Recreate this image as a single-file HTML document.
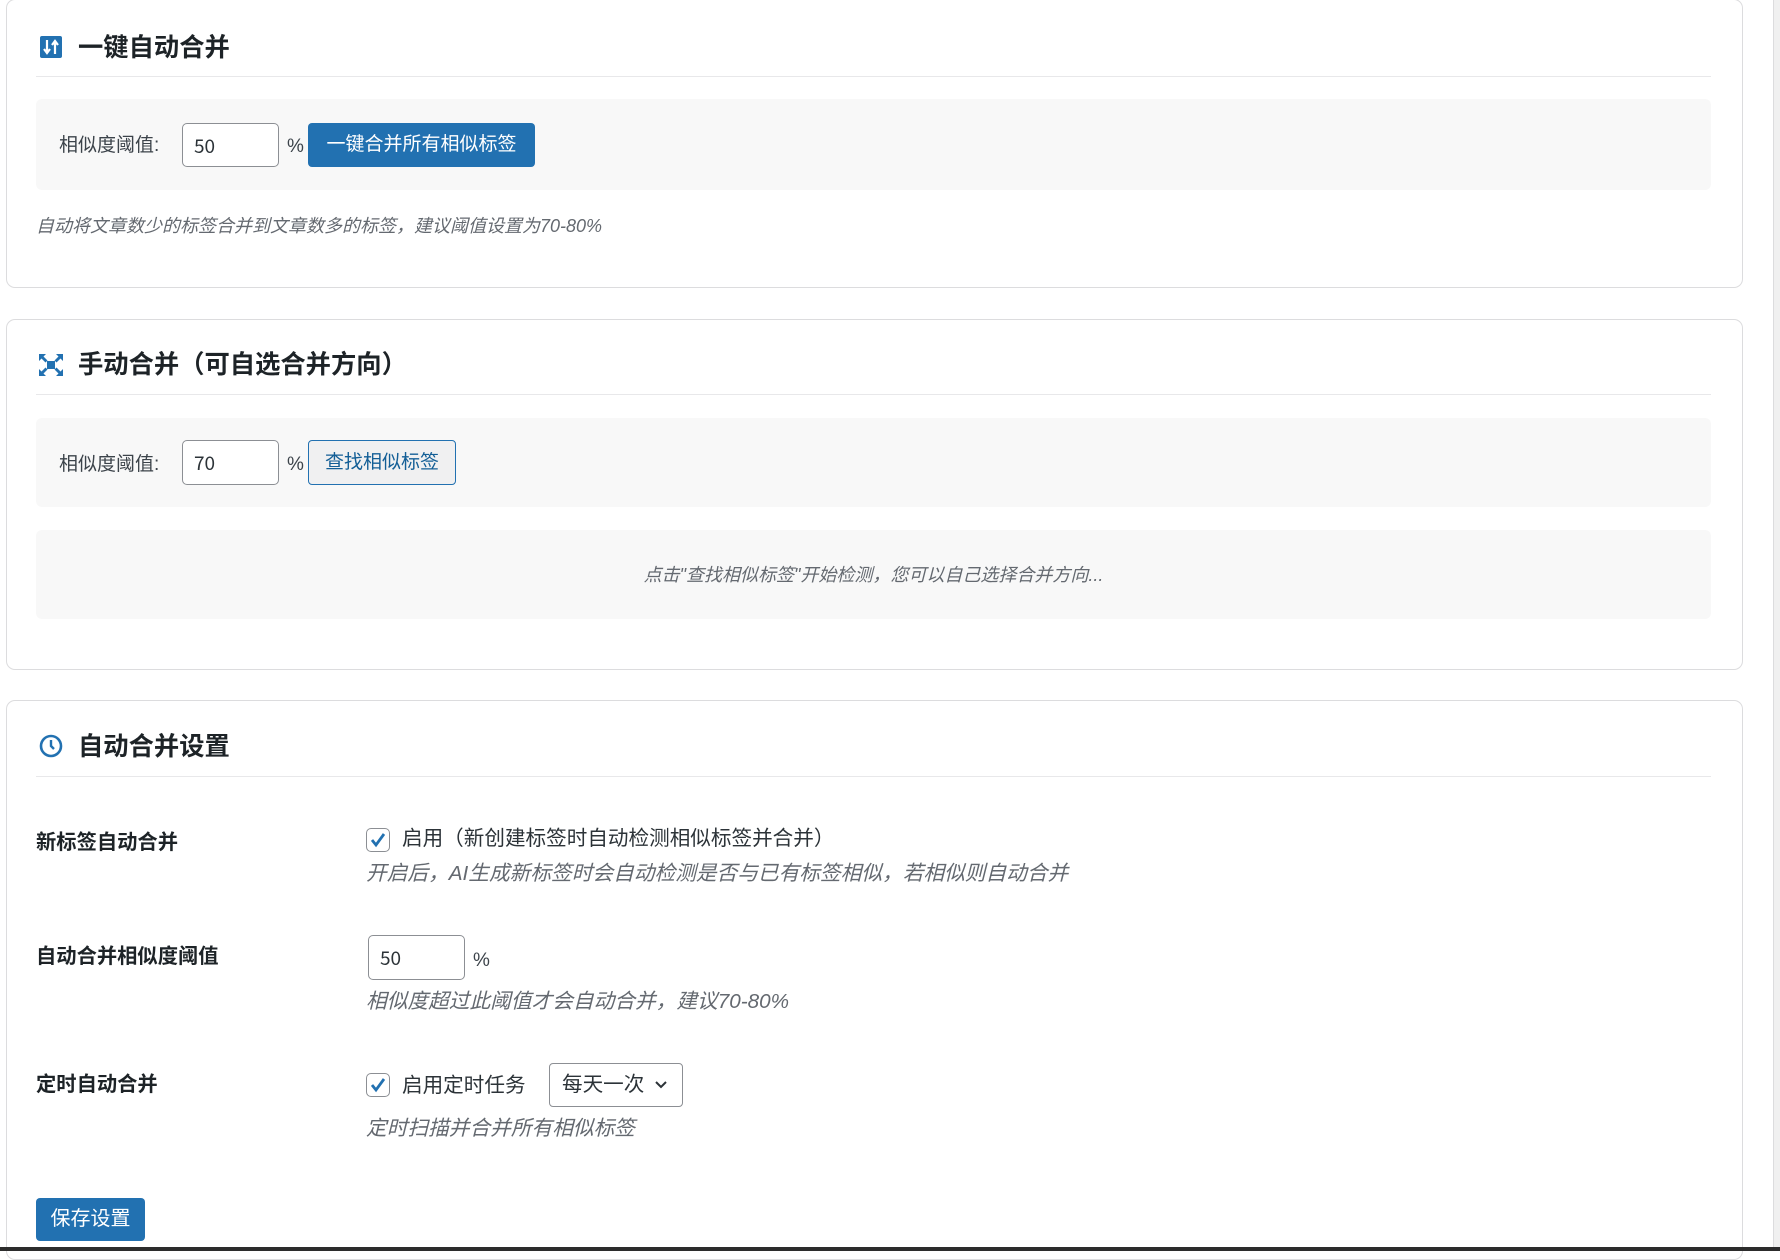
<!DOCTYPE html>
<html><head><meta charset="utf-8"><style>
*{box-sizing:border-box;margin:0;padding:0}
body{width:1780px;height:1251px;overflow:hidden;background:#fff;position:relative;font-family:"Liberation Sans","Noto Sans CJK SC",sans-serif;color:#1d2327}
.a{position:absolute}
.panel{position:absolute;left:6px;width:1737px;border:1px solid #dcdcde;border-radius:9px;background:#fff}
.h{position:absolute;left:78px;font-size:25.3px;font-weight:bold;line-height:30px;white-space:nowrap}
.sep{position:absolute;left:36px;width:1675px;height:1px;background:#e8e8ea}
.gb{position:absolute;left:36px;width:1675px;background:#f8f8f8;border-radius:6px}
.lbl{font-size:19px;line-height:24px;color:#3c434a;white-space:nowrap}
.inp{position:absolute;border:1px solid #8c8f94;border-radius:5px;background:#fff;font-size:19px;line-height:44px;padding-left:11px;color:#2c3338;font-family:"Noto Sans CJK SC","Liberation Sans",sans-serif}
.desc{font-size:18px;font-style:italic;color:#646970;white-space:nowrap;line-height:22px}
.btn{position:absolute;border-radius:4px;font-size:19px;text-align:center;white-space:nowrap}
.rl{position:absolute;left:36px;font-size:20.3px;font-weight:bold;line-height:24px;white-space:nowrap}
.cb{position:absolute;width:24px;height:24px;border:1px solid #8c8f94;border-radius:5px;background:#fff}
</style></head><body>

<div class="panel" style="top:-1px;height:289px"></div>
<svg class="a" style="left:40px;top:36px" width="22" height="22" viewBox="0 0 22 22"><rect width="22" height="22" rx="2" fill="#2271b1"/><path d="M7 4v12M4 13l3 4 3-4M15 18V6M12 9l3-4 3 4" stroke="#fff" stroke-width="2.2" fill="none"/></svg>
<div class="h" style="top:33px">一键自动合并</div>
<div class="sep" style="top:76px"></div>
<div class="gb" style="top:99px;height:91px"></div>
<div class="a lbl" style="left:59px;top:134px">相似度阈值:</div>
<div class="inp" style="left:182px;top:123px;width:97px;height:44px">50</div>
<div class="a lbl" style="left:287px;top:135px">%</div>
<div class="btn" style="left:308px;top:123px;width:227px;height:44px;background:#2271b1;color:#fff;line-height:44px">一键合并所有相似标签</div>
<div class="a desc" style="left:36px;top:215px">自动将文章数少的标签合并到文章数多的标签，建议阈值设置为70-80%</div>

<div class="panel" style="top:319px;height:351px"></div>
<svg class="a" style="left:38px;top:353px" width="26" height="24" viewBox="0 0 26 24"><g fill="#2271b1"><rect x="9" y="8" width="8" height="8"/><path d="M1 1h7l-2.5 2.5 4 4-2 2-4-4L1 8zM25 1h-7l2.5 2.5-4 4 2 2 4-4L25 8zM1 23h7l-2.5-2.5 4-4-2-2-4 4L1 16zM25 23h-7l2.5-2.5-4-4 2-2 4 4L25 16z"/></g></svg>
<div class="h" style="top:350px">手动合并（可自选合并方向）</div>
<div class="sep" style="top:394px"></div>
<div class="gb" style="top:418px;height:89px"></div>
<div class="a lbl" style="left:59px;top:453px">相似度阈值:</div>
<div class="inp" style="left:182px;top:440px;width:97px;height:45px">70</div>
<div class="a lbl" style="left:287px;top:453px">%</div>
<div class="btn" style="left:308px;top:440px;width:148px;height:45px;background:#f0f0f1;border:1px solid #2271b1;color:#135e96;line-height:43px">查找相似标签</div>
<div class="gb" style="top:530px;height:89px"></div>
<div class="a desc" style="left:36px;width:1675px;text-align:center;top:564px">点击"查找相似标签"开始检测，您可以自己选择合并方向...</div>

<div class="panel" style="top:700px;height:560px"></div>
<svg class="a" style="left:39px;top:734px" width="24" height="24" viewBox="0 0 24 24"><circle cx="12" cy="12" r="10" stroke="#2271b1" stroke-width="2.6" fill="none"/><path d="M12 6v6l3 3" stroke="#2271b1" stroke-width="2.4" fill="none"/></svg>
<div class="h" style="top:732px">自动合并设置</div>
<div class="sep" style="top:776px"></div>

<div class="rl" style="top:831px">新标签自动合并</div>
<div class="cb" style="left:366px;top:828px"></div>
<svg class="a" style="left:369px;top:831px" width="18" height="18" viewBox="0 0 18 18"><path d="M3 9l4 5 8-11" stroke="#2271b1" stroke-width="2.8" fill="none"/></svg>
<div class="a lbl" style="left:402px;top:827px;color:#2c3338;font-size:20.6px">启用（新创建标签时自动检测相似标签并合并）</div>
<div class="a desc" style="left:366px;top:863px;font-size:20.7px">开启后，AI生成新标签时会自动检测是否与已有标签相似，若相似则自动合并</div>

<div class="rl" style="top:945px">自动合并相似度阈值</div>
<div class="inp" style="left:368px;top:935px;width:97px;height:45px">50</div>
<div class="a lbl" style="left:473px;top:949px">%</div>
<div class="a desc" style="left:366px;top:991px;font-size:20.7px">相似度超过此阈值才会自动合并，建议70-80%</div>

<div class="rl" style="top:1073px">定时自动合并</div>
<div class="cb" style="left:366px;top:1073px"></div>
<svg class="a" style="left:369px;top:1076px" width="18" height="18" viewBox="0 0 18 18"><path d="M3 9l4 5 8-11" stroke="#2271b1" stroke-width="2.8" fill="none"/></svg>
<div class="a lbl" style="left:402px;top:1074px;color:#2c3338;font-size:20.6px">启用定时任务</div>
<div class="a" style="left:549px;top:1063px;width:134px;height:44px;border:1px solid #8c8f94;border-radius:4px;font-size:20.6px;line-height:42px;padding-left:12px;color:#2c3338">每天一次</div>
<svg class="a" style="left:654px;top:1080px" width="14" height="10" viewBox="0 0 14 10"><path d="M2 2l5 5 5-5" stroke="#2c3338" stroke-width="2" fill="none"/></svg>
<div class="a desc" style="left:366px;top:1118px;font-size:20.7px">定时扫描并合并所有相似标签</div>

<div class="btn" style="left:36px;top:1198px;width:109px;height:43px;background:#2271b1;color:#fff;line-height:43px;font-size:20px">保存设置</div>

<div class="a" style="left:1773px;top:0;width:7px;height:1251px;background:#f0f0f0;border-left:1px solid #dcdcde"></div>
<div class="a" style="left:0;top:1247px;width:1780px;height:4px;background:#2c2c2c"></div>
</body></html>
